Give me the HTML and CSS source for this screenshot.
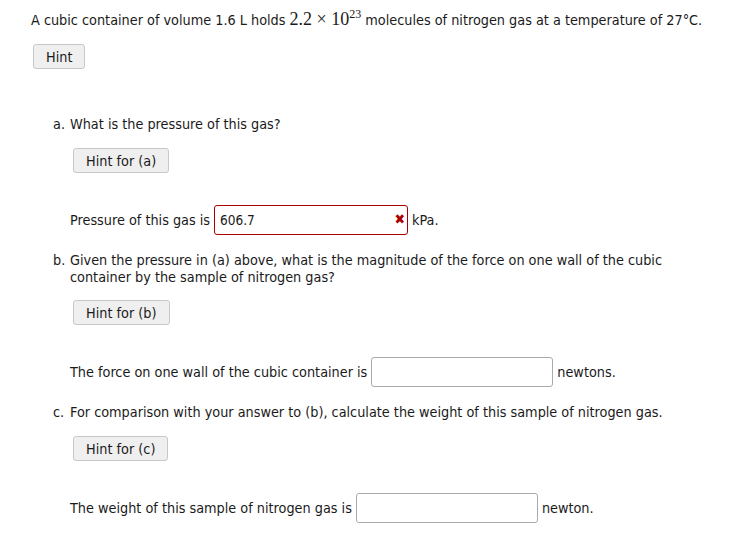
FILE: index.html
```html
<!DOCTYPE html>
<html lang="en">
<head>
    <meta charset="UTF-8">
    <meta name="viewport" content="width=device-width, initial-scale=1.0">
    <title>Problem</title>
    <link rel="stylesheet" href="styles.css">
</head>
<body>
    <div class="problem">
        <p class="intro">A cubic container of volume 1.6 L holds <span class="math">2.2 <span class="times">&times;</span> 10<sup>23</sup></span> molecules of nitrogen gas at a temperature of 27&deg;C.</p>
        <button class="hint hint-main">Hint</button>

        <div class="part part-a">
            <p class="question"><span class="label">a.</span><span>What is the pressure of this gas?</span></p>
            <button class="hint">Hint for (a)</button>
            <p class="answer">Pressure of this gas is
                <span class="field wrong"><input type="text" value="606.7"><span class="mark">&#x2716;</span></span>
                kPa.</p>
        </div>

        <div class="part part-b">
            <p class="question"><span class="label">b.</span><span>Given the pressure in (a) above, what is the magnitude of the force on one wall of the cubic container by the sample of nitrogen gas?</span></p>
            <button class="hint">Hint for (b)</button>
            <p class="answer">The force on one wall of the cubic container is
                <span class="field"><input type="text"></span>
                newtons.</p>
        </div>

        <div class="part part-c">
            <p class="question"><span class="label">c.</span><span>For comparison with your answer to (b), calculate the weight of this sample of nitrogen gas.</span></p>
            <button class="hint">Hint for (c)</button>
            <p class="answer">The weight of this sample of nitrogen gas is
                <span class="field"><input type="text"></span>
                newton.</p>
        </div>
    </div>
</body>
</html>
```

FILE: styles.css
```css
body {
    margin: 0;
    background-color: #fff;
    color: #1a1a1a;
    font-family: "DejaVu Sans Condensed", "DejaVu Sans", sans-serif;
    font-size: 14.3px;
}

.problem {
    padding: 9px 31px;
    width: 640px;
}

p {
    margin: 0;
}

.intro {
    line-height: 20px;
    white-space: nowrap;
}

.math {
    font-family: "Liberation Serif", serif;
    font-size: 18px;
}

.math sup {
    font-size: 12px;
    vertical-align: 7px;
    line-height: 0;
}

.hint {
    display: block;
    height: 25px;
    padding: 0 12px;
    font-family: inherit;
    font-size: 14.3px;
    color: #1a1a1a;
    background-color: #efefef;
    border: 1px solid #c8c8c8;
    border-radius: 3px;
}

.hint-main {
    margin: 14px 0 0 2px;
}

.part {
    padding-left: 22px;
}

.part-a {
    margin-top: 47px;
}

.part-b {
    margin-top: 17px;
}

.part-c {
    margin-top: 17px;
}

.question {
    display: flex;
    line-height: 17px;
}

.question .label {
    width: 17px;
    flex-shrink: 0;
}

.part .hint {
    margin: 15px 0 0 20px;
}

.part-b .hint {
    margin-top: 14px;
}

.answer {
    display: flex;
    align-items: center;
    gap: 4px;
    margin: 32px 0 0 17px;
    height: 30px;
}

.field {
    position: relative;
    display: inline-block;
}

.field input {
    box-sizing: border-box;
    width: 182px;
    height: 30px;
    padding: 0 5px;
    font-family: inherit;
    font-size: 13.5px;
    color: #1a1a1a;
    border: 1px solid #aaa;
    border-radius: 3px;
    outline: none;
}

.field.wrong input {
    width: 194px;
    border-color: #a00;
}

.mark {
    position: absolute;
    right: 3px;
    top: 6px;
    font-size: 14px;
    color: #a00;
}
```
